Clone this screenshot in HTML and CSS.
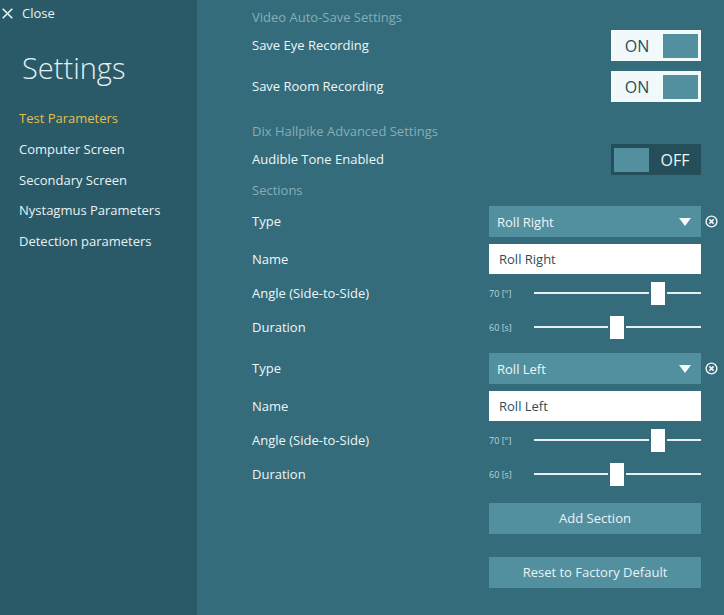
FILE: index.html
```html
<!DOCTYPE html>
<html>
<head>
	<meta charset="utf-8">
	<title>Settings</title>
	<link rel="stylesheet" href="styles.css">
</head>
<body>
	<div class="side">
		<div class="close_box">
			<svg class="close_icon" width="11" height="11" viewBox="0 0 11 11"><path d="M0.7 0.7L10.3 10.3M10.3 0.7L0.7 10.3" stroke="#eef6f7" stroke-width="1.5" fill="none"/></svg>
			<span>Close</span>
		</div>
		<div class="side_title">Settings</div>
		<ul class="side_nav">
			<li class="active">Test Parameters</li>
			<li>Computer Screen</li>
			<li>Secondary Screen</li>
			<li>Nystagmus Parameters</li>
			<li>Detection parameters</li>
		</ul>
	</div>

	<div class="main">
		<div class="heading">Video Auto-Save Settings</div>
		<div class="row row_toggle">
			<span>Save Eye Recording</span>
			<div class="toggle on"><span class="toggle_text">ON</span><span class="toggle_knob"></span></div>
		</div>
		<div class="row row_toggle gap10">
			<span>Save Room Recording</span>
			<div class="toggle on"><span class="toggle_text">ON</span><span class="toggle_knob"></span></div>
		</div>

		<div class="heading gap19">Dix Hallpike Advanced Settings</div>
		<div class="row row_toggle">
			<span>Audible Tone Enabled</span>
			<div class="toggle off"><span class="toggle_knob"></span><span class="toggle_text">OFF</span></div>
		</div>

		<div class="heading gap5">Sections</div>

		<div class="row row_select gap6">
			<span>Type</span>
			<div class="select"><span>Roll Right</span><i class="arrow"></i></div>
			<svg class="remove" width="13" height="13" viewBox="0 0 13 13"><circle cx="6.5" cy="6.5" r="5.4" stroke="#f2f8f9" stroke-width="1.4" fill="none"/><path d="M4.4 4.4L8.6 8.6M8.6 4.4L4.4 8.6" stroke="#f2f8f9" stroke-width="1.5" fill="none"/></svg>
		</div>
		<div class="row row_input">
			<span>Name</span>
			<div class="input">Roll Right</div>
		</div>
		<div class="row row_slider">
			<span>Angle (Side-to-Side)</span>
			<div class="slider">
				<span class="slider_val">70 [°]</span>
				<span class="track" style="width: 115px"></span><span class="thumb"></span><span class="track fill"></span>
			</div>
		</div>
		<div class="row row_slider">
			<span>Duration</span>
			<div class="slider">
				<span class="slider_val">60 [s]</span>
				<span class="track" style="width: 74px"></span><span class="thumb"></span><span class="track fill"></span>
			</div>
		</div>

		<div class="row row_select gap9">
			<span>Type</span>
			<div class="select"><span>Roll Left</span><i class="arrow"></i></div>
			<svg class="remove" width="13" height="13" viewBox="0 0 13 13"><circle cx="6.5" cy="6.5" r="5.4" stroke="#f2f8f9" stroke-width="1.4" fill="none"/><path d="M4.4 4.4L8.6 8.6M8.6 4.4L4.4 8.6" stroke="#f2f8f9" stroke-width="1.5" fill="none"/></svg>
		</div>
		<div class="row row_input">
			<span>Name</span>
			<div class="input">Roll Left</div>
		</div>
		<div class="row row_slider">
			<span>Angle (Side-to-Side)</span>
			<div class="slider">
				<span class="slider_val">70 [°]</span>
				<span class="track" style="width: 115px"></span><span class="thumb"></span><span class="track fill"></span>
			</div>
		</div>
		<div class="row row_slider">
			<span>Duration</span>
			<div class="slider">
				<span class="slider_val">60 [s]</span>
				<span class="track" style="width: 74px"></span><span class="thumb"></span><span class="track fill"></span>
			</div>
		</div>

		<div class="row row_button gap12"><div class="button">Add Section</div></div>
		<div class="row row_button gap23"><div class="button">Reset to Factory Default</div></div>
	</div>
</body>
</html>
```

FILE: styles.css
```css
*{margin: 0; padding: 0; box-sizing: border-box;}
ul,li{list-style: none;}
html,body{height: 100%;}
body{display: flex; overflow: hidden; background-color: #346c7b; color: #eef6f7;
	font-family: "Open Sans", "Noto Sans", sans-serif; font-size: 13px;}

/* left side */
.side{width: 197px; height: 100%; flex: none; color: #e8f2f4; background-color: #2a5a68;}
.close_box{display: flex; align-items: center; height: 26px; padding-left: 2px;}
.close_icon{margin-right: 9px;}
.side_title{margin: 19px 0 0 22px; height: 45px; line-height: 45px;
	font-size: 29px; font-weight: 300; color: #e4eff2;}
.side_nav{margin-top: 13px; padding-left: 19px;}
.side_nav li{height: 30.8px; line-height: 30.8px;}
.side_nav .active{color: #e3c04e;}

/* right side */
.main{width: 527px; padding: 7px 0 0 55px;}
.heading{height: 20px; line-height: 20px; color: #86aeb8;}
.row{display: grid; grid-template-columns: 237px 212px 23px; align-items: center;}
.gap5{margin-top: 5px;}
.gap6{margin-top: 6px;}
.gap9{margin-top: 9px;}
.gap10{margin-top: 10px;}
.gap12{margin-top: 12px;}
.gap19{margin-top: 19px;}
.gap23{margin-top: 23px;}

.row_toggle{height: 31px; margin-top: 3px;}
.row_toggle.gap10{margin-top: 10px;}
.row_toggle > span,.row_select > span{margin-bottom: 2px;}
.toggle{display: flex; align-items: center; justify-content: space-between;
	justify-self: end; width: 90px; height: 31px; padding: 0 3px; font-size: 16px;}
.toggle.on{background-color: #f1f9fb; color: #24505c;}
.toggle.off{background-color: #234e5a; color: #eef6f7;}
.toggle_text{width: 50px; text-align: center;}
.toggle_knob{width: 36px; height: 24px; background-color: #53909f;}
.toggle.on .toggle_text{padding-right: 3px;}
.toggle.off .toggle_text{padding-left: 3px;}

.row_select{height: 31px;}
.select{display: flex; align-items: center; justify-content: space-between; height: 31px;
	padding: 0 10px 0 8px; background-color: #53909f; color: #eef6f7;}
.arrow{width: 0; height: 0; border-left: 6px solid transparent; border-right: 6px solid transparent;
	border-top: 8px solid #f5fafb;}
.remove{margin-left: 4px;}

.row_input{height: 30px; margin-top: 7px; margin-bottom: 2px;}
.input{height: 30px; line-height: 30px; padding-left: 10px; background-color: #fff; color: #2d4f59;}

.row_slider{height: 34px;}
.slider{display: flex; align-items: center;}
.slider_val{width: 45px; flex: none; font-size: 9px; color: #bcd5db;}
.track{height: 2px; background-color: #e6f0f2;}
.track.fill{flex: 1;}
.thumb{width: 14px; height: 23px; margin: 0 2px; background-color: #fff;}

.row_button{height: 31px;}
.button{grid-column: 2; height: 31px; line-height: 30px; text-align: center;
	background-color: #53909f; color: #e8f3f5;}
```
